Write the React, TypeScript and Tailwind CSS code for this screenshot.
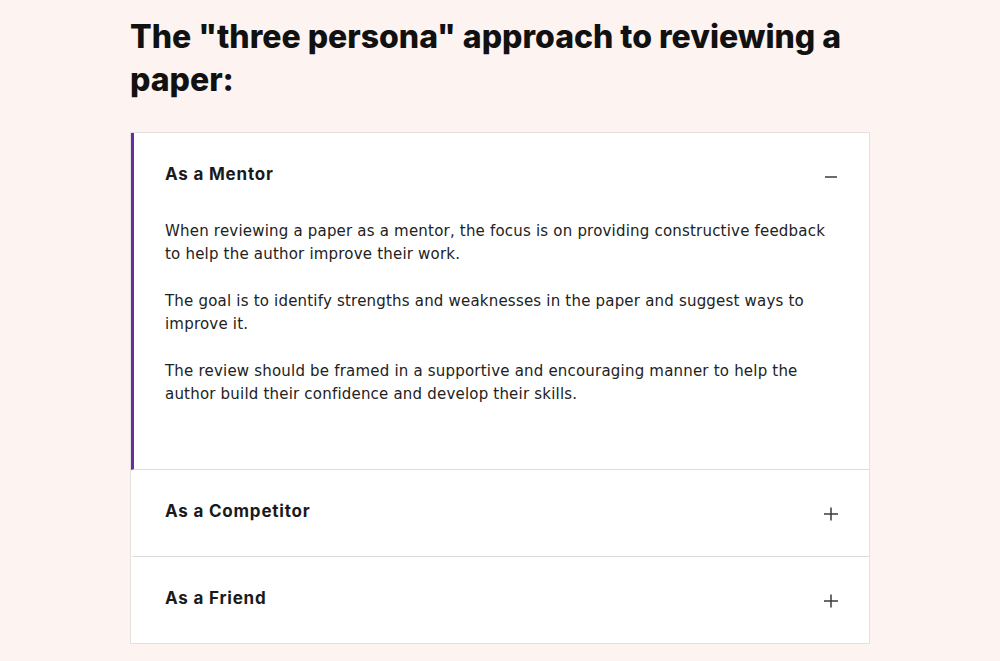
import { FC, useState } from 'react';

type Persona = {
  id: string;
  title: string;
  paragraphs: string[];
};

const personas: Persona[] = [
  {
    id: 'mentor',
    title: 'As a Mentor',
    paragraphs: [
      'When reviewing a paper as a mentor, the focus is on providing constructive feedback to help the author improve their work.',
      'The goal is to identify strengths and weaknesses in the paper and suggest ways to improve it.',
      'The review should be framed in a supportive and encouraging manner to help the author build their confidence and develop their skills.'
    ]
  },
  {
    id: 'competitor',
    title: 'As a Competitor',
    paragraphs: [
      'When reviewing a paper as a competitor, the focus is on critically evaluating the work and looking for weaknesses in the argument or methodology.'
    ]
  },
  {
    id: 'friend',
    title: 'As a Friend',
    paragraphs: [
      'When reviewing a paper as a friend, the focus is on giving honest, caring feedback that the author can act on.'
    ]
  }
];

const ToggleIcon: FC<{ open: boolean }> = ({ open }) => (
  <svg width="16" height="16" viewBox="0 0 16 16" className="mt-[3px] text-[#3a3a3a]">
    <path d={open ? 'M2 8h12' : 'M1 8h14'} stroke="currentColor" strokeWidth="1.5" />
    {!open && <path d="M8 1.5v13" stroke="currentColor" strokeWidth="1.5" />}
  </svg>
);

const Item: FC<{
  persona: Persona;
  open: boolean;
  last: boolean;
  onToggle: () => void;
}> = ({ persona, open, last, onToggle }) => (
  <div
    className={`border-l-[3px] ${open ? 'border-l-[#6b2ba3]' : 'border-l-transparent'} ${
      last ? '' : 'border-b border-b-[#dcdcdc]'
    }`}
  >
    <button
      type="button"
      onClick={onToggle}
      className="flex h-[86px] w-full items-center justify-between pb-[2px] pl-[31px] pr-[30px] text-left"
    >
      <span className="text-[17px] font-bold tracking-[0.8px] text-[#1a1a1a]">
        {persona.title}
      </span>
      <ToggleIcon open={open} />
    </button>
    {open && (
      <div className="pb-[39px] pl-[31px] pr-[36px] pt-[1px] font-['DejaVu_Sans',sans-serif]">
        {persona.paragraphs.map(p => (
          <p
            key={p}
            className="mb-[24px] text-[15px] leading-[23px] tracking-[0.2px] text-[#222]"
          >
            {p}
          </p>
        ))}
      </div>
    )}
  </div>
);

export default function App() {
  const [openId, setOpenId] = useState<string | null>('mentor');

  return (
    <div className="min-h-[661px] bg-[#fdf3f1] font-['Inter',sans-serif]">
      <div className="mx-auto w-[740px] pt-[15px]">
        <h1 className="text-[32px] font-extrabold leading-[43px] text-[#111]">
          The "three persona" approach to reviewing a paper:
        </h1>
        <div className="mt-[31px] border border-[#e4e0df] bg-white">
          {personas.map((p, i) => (
            <Item
              key={p.id}
              persona={p}
              open={openId === p.id}
              last={i === personas.length - 1}
              onToggle={() => setOpenId(openId === p.id ? null : p.id)}
            />
          ))}
        </div>
      </div>
    </div>
  );
}
